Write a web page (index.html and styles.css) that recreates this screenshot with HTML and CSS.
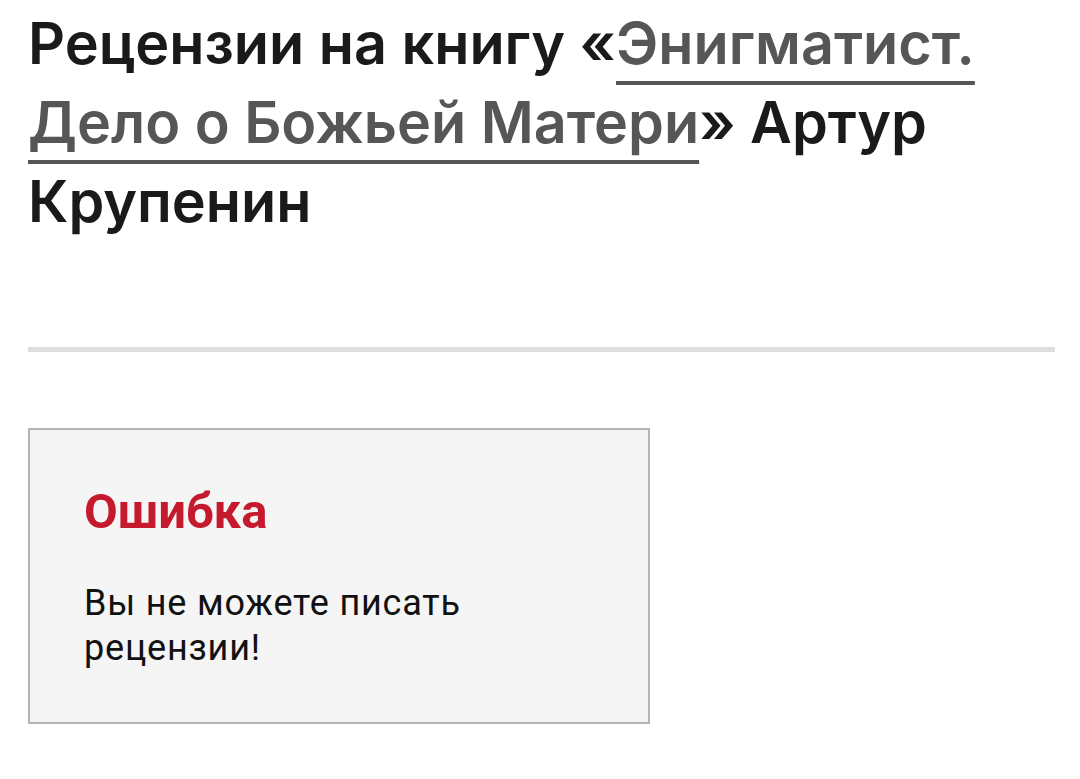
FILE: index.html
```html
<!DOCTYPE html>
<html lang="ru">
<head>
    <meta charset="UTF-8">
    <meta name="viewport" content="width=device-width, initial-scale=1.0">
    <title>Рецензии на книгу</title>
    <link rel="stylesheet" href="styles.css">
</head>
<body>
    <div class="page">
        <h1 class="page-title">Рецензии на книгу «<a href="#" class="book-link">Энигматист. Дело о Божьей Матери</a>» Артур Крупенин</h1>

        <hr class="divider">

        <div class="notice">
            <h2 class="notice-title">Ошибка</h2>
            <p class="notice-text">Вы не можете писать рецензии!</p>
        </div>
    </div>
</body>
</html>
```

FILE: styles.css
```css
body { margin: 0; background: #fff; color: #1a1a1a; font-family: Roboto, "Noto Sans", sans-serif; }
.page { padding: 4px 25px 40px 28px; }
.page-title { margin: 0; font-family: Inter, Roboto, sans-serif; font-size: 57.5px; font-weight: 600; line-height: 79px; color: #1a1a1a; max-width: 990px; }
.book-link { color: #565656; text-decoration: underline; text-decoration-thickness: 4px; text-underline-offset: 17px; }
.divider { margin: 106px 0 0; border: none; height: 5px; background: #dedede; }
.notice { width: 622px; margin-top: 76px; padding: 54px 54px 51px 54px; box-sizing: border-box; background: #f5f5f5; border: 2px solid #b4b4b4; }
.notice-title { margin: 0; font-size: 49px; font-weight: 700; color: #c5192d; line-height: 56px; }
.notice-text { margin: 41px 0 0; font-size: 36px; line-height: 45px; letter-spacing: 0.8px; color: #111; max-width: 430px; }
```
